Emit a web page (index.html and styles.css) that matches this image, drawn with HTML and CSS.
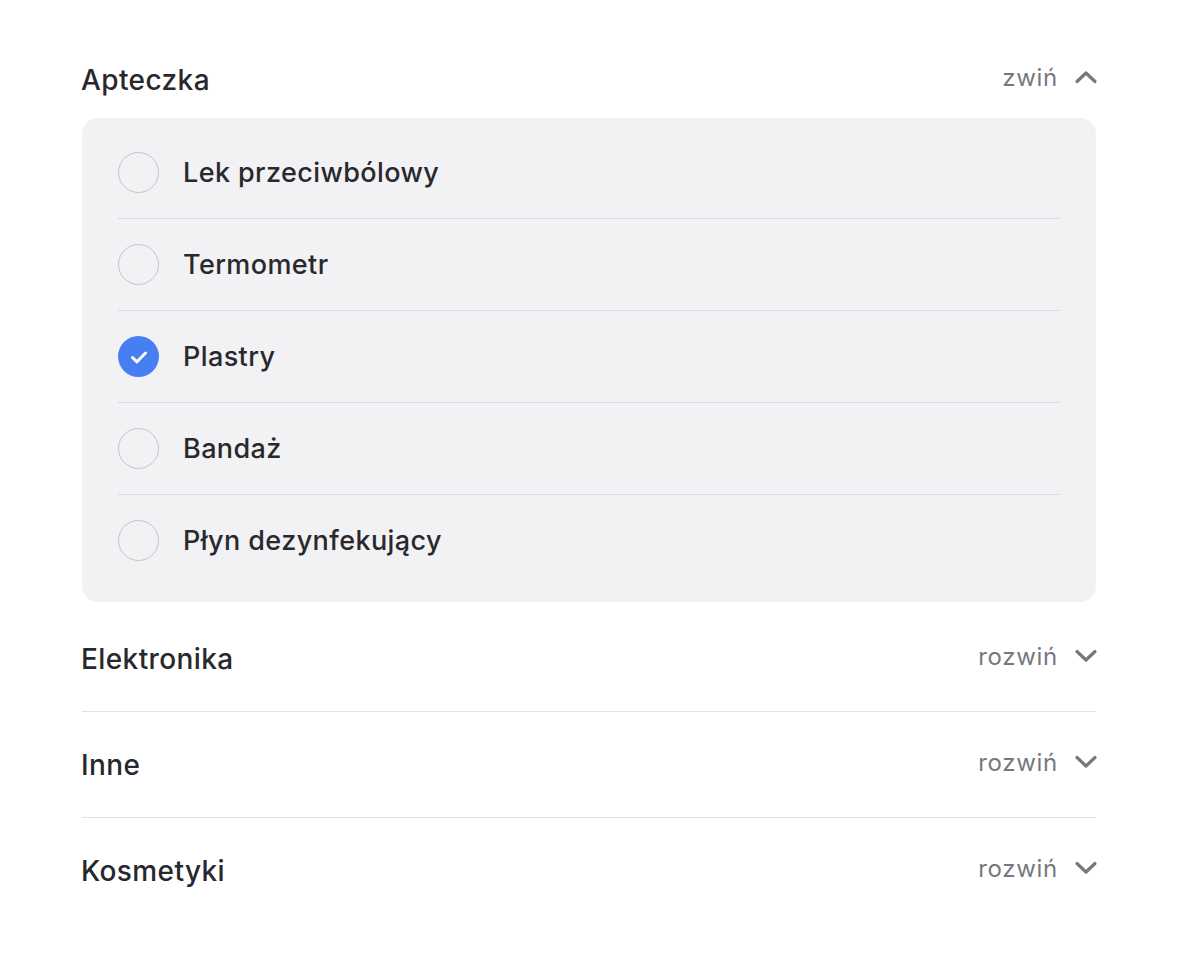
FILE: index.html
```html
<!DOCTYPE html>
<html lang="pl">
<head>
    <meta charset="UTF-8">
    <meta name="viewport" content="width=device-width, initial-scale=1.0">
    <title>Lista rzeczy</title>
    <link rel="stylesheet" href="styles.css">
</head>
<body>
    <div class="list">

        <section class="group open">
            <div class="group-head">
                <h3>Apteczka</h3>
                <button class="toggle">zwiń
                    <svg viewBox="0 0 24 14" width="24" height="14"><path d="M3 11.5 L12 3 L21 11.5"/></svg>
                </button>
            </div>
            <ul class="items">
                <li class="item"><span class="check"></span><span>Lek przeciwbólowy</span></li>
                <li class="item"><span class="check"></span><span>Termometr</span></li>
                <li class="item"><span class="check done">
                    <svg viewBox="0 0 22 22" width="22" height="22"><path d="M4.5 11.5 L9 15.8 L17.5 7"/></svg>
                </span><span>Plastry</span></li>
                <li class="item"><span class="check"></span><span>Bandaż</span></li>
                <li class="item"><span class="check"></span><span>Płyn dezynfekujący</span></li>
            </ul>
        </section>

        <section class="group">
            <div class="group-head">
                <h3>Elektronika</h3>
                <button class="toggle">rozwiń
                    <svg viewBox="0 0 24 14" width="24" height="14"><path d="M3 2.5 L12 11 L21 2.5"/></svg>
                </button>
            </div>
        </section>

        <section class="group">
            <div class="group-head">
                <h3>Inne</h3>
                <button class="toggle">rozwiń
                    <svg viewBox="0 0 24 14" width="24" height="14"><path d="M3 2.5 L12 11 L21 2.5"/></svg>
                </button>
            </div>
        </section>

        <section class="group">
            <div class="group-head">
                <h3>Kosmetyki</h3>
                <button class="toggle">rozwiń
                    <svg viewBox="0 0 24 14" width="24" height="14"><path d="M3 2.5 L12 11 L21 2.5"/></svg>
                </button>
            </div>
        </section>

    </div>
</body>
</html>
```

FILE: styles.css
```css
body {
    margin: 0;
    background: #ffffff;
    font-family: Inter, "Liberation Sans", sans-serif;
    color: #28282d;
}
.list {
    width: 1014px;
    margin-left: 82px;
    padding-top: 27px;
}
.group {
    border-bottom: 1px solid #e2e2e6;
}
.group:last-child,
.group.open {
    border-bottom: none;
}
.group-head {
    display: flex;
    align-items: center;
    justify-content: space-between;
    padding: 37px 0 36px;
    margin-left: -1px;
}
.group.open .group-head {
    padding-bottom: 22px;
}
.group.open + .group {
    margin-top: 4px;
}
.group-head h3 {
    margin: 0;
    font-size: 28px;
    line-height: 32px;
    font-weight: 500;
    letter-spacing: 0.4px;
}
.toggle {
    display: flex;
    align-items: center;
    gap: 16px;
    margin: -6px -2px 0 0;
    padding: 0;
    border: none;
    background: none;
    font-family: inherit;
    font-size: 24px;
    letter-spacing: 0.7px;
    color: #78777f;
}
.toggle svg path {
    fill: none;
    stroke: #78777f;
    stroke-width: 3.2;
    stroke-linecap: round;
    stroke-linejoin: round;
}
.items {
    list-style: none;
    margin: 0;
    padding: 9px 36px 16px;
    background: #f2f2f4;
    border-radius: 16px;
}
.item {
    display: flex;
    align-items: center;
    gap: 24px;
    padding: 25px 0;
    font-size: 27px;
    line-height: 41px;
    font-weight: 500;
    letter-spacing: 0.4px;
    border-bottom: 1px solid #d9d9df;
}
.item:last-child {
    border-bottom: none;
}
.check {
    width: 41px;
    height: 41px;
    box-sizing: border-box;
    border: 1.5px solid #c4c4ca;
    border-radius: 50%;
    display: flex;
    align-items: center;
    justify-content: center;
    flex-shrink: 0;
}
.check.done {
    border: none;
    background: #477ef1;
}
.check.done svg {
    width: 22px;
    height: 22px;
    flex-shrink: 0;
}
.check.done path {
    fill: none;
    stroke: #ffffff;
    stroke-width: 3;
    stroke-linecap: round;
    stroke-linejoin: round;
}
```
